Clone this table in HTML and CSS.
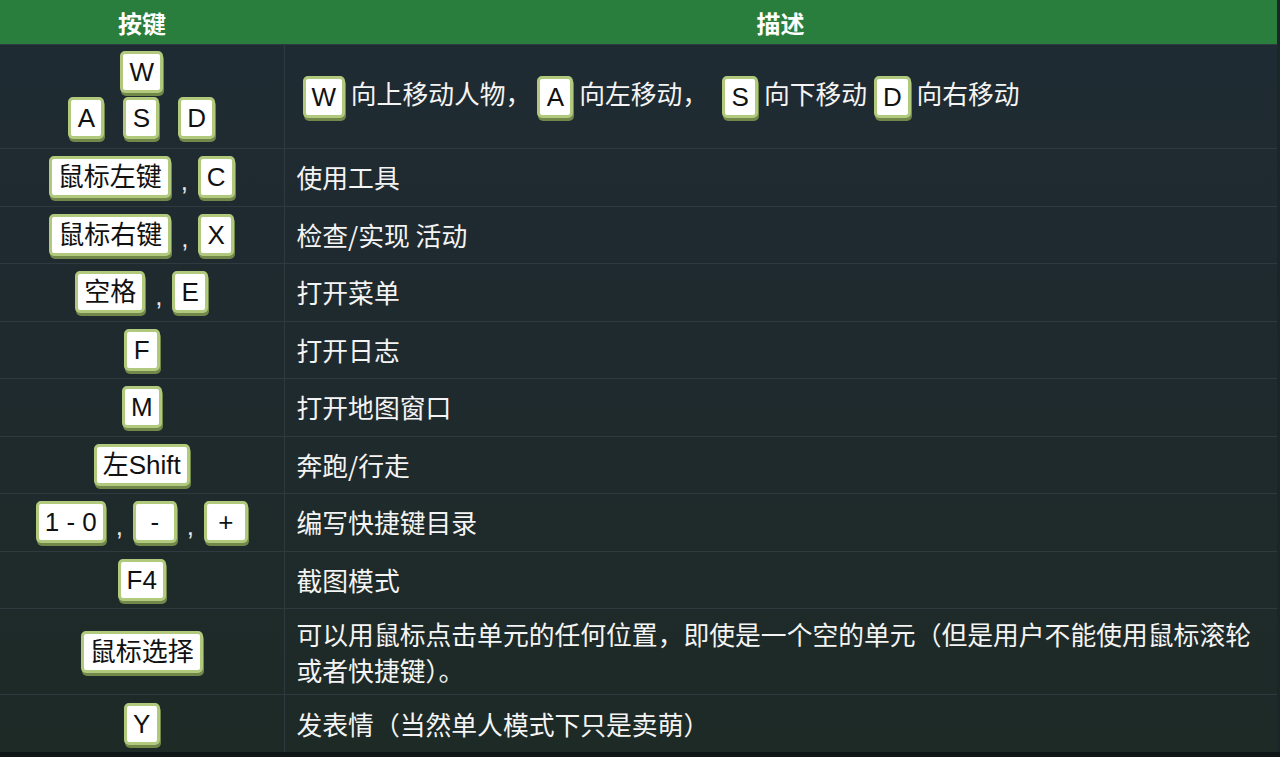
FILE: index.html
```html
<!DOCTYPE html>
<html lang="zh-CN">
<head>
    <meta charset="UTF-8">
    <meta name="viewport" content="width=device-width, initial-scale=1.0">
    <title>按键说明</title>
    <link rel="stylesheet" href="styles.css">
</head>
<body>
    <table class="keys-table">
        <thead>
            <tr>
                <th class="col-key">按键</th>
                <th>描述</th>
            </tr>
        </thead>
        <tbody>
            <tr class="row-tall">
                <td class="col-key">
                    <div class="wasd">
                        <div class="wasd-row"><span class="key">W</span></div>
                        <div class="wasd-row">
                            <span class="key">A</span>
                            <span class="key">S</span>
                            <span class="key">D</span>
                        </div>
                    </div>
                </td>
                <td class="desc desc-inline">
                    <span class="key">W</span> 向上移动人物，<span class="gap"></span><span class="key">A</span> 向左移动，<span class="gap wide"></span><span class="key">S</span> 向下移动 <span class="gap small"></span><span class="key">D</span> 向右移动
                </td>
            </tr>
            <tr>
                <td class="col-key"><span class="key">鼠标左键</span><span class="sep">,</span><span class="key">C</span></td>
                <td class="desc">使用工具</td>
            </tr>
            <tr>
                <td class="col-key"><span class="key">鼠标右键</span><span class="sep">,</span><span class="key">X</span></td>
                <td class="desc">检查/实现 活动</td>
            </tr>
            <tr>
                <td class="col-key"><span class="key">空格</span><span class="sep">,</span><span class="key">E</span></td>
                <td class="desc">打开菜单</td>
            </tr>
            <tr>
                <td class="col-key"><span class="key">F</span></td>
                <td class="desc">打开日志</td>
            </tr>
            <tr>
                <td class="col-key"><span class="key">M</span></td>
                <td class="desc">打开地图窗口</td>
            </tr>
            <tr>
                <td class="col-key"><span class="key">左Shift</span></td>
                <td class="desc">奔跑/行走</td>
            </tr>
            <tr>
                <td class="col-key"><span class="key">1 - 0</span><span class="sep">,</span><span class="key key-wide">-</span><span class="sep">,</span><span class="key key-wide">+</span></td>
                <td class="desc">编写快捷键目录</td>
            </tr>
            <tr>
                <td class="col-key"><span class="key">F4</span></td>
                <td class="desc">截图模式</td>
            </tr>
            <tr class="row-mid">
                <td class="col-key"><span class="key">鼠标选择</span></td>
                <td class="desc">可以用鼠标点击单元的任何位置，即使是一个空的单元（但是用户不能使用鼠标滚轮或者快捷键）。</td>
            </tr>
            <tr class="row-last">
                <td class="col-key"><span class="key">Y</span></td>
                <td class="desc">发表情（当然单人模式下只是卖萌）</td>
            </tr>
        </tbody>
    </table>
    <div class="bottom-strip"></div>
</body>
</html>
```

FILE: styles.css
```css
body {
    margin: 0;
    padding: 0;
    background-color: #1c2629;
    font-family: "Liberation Sans", "Noto Sans CJK SC", sans-serif;
    color: #f2f2f2;
    height: 757px;
    overflow: hidden;
}

.keys-table {
    width: 1277px;
    border-collapse: collapse;
    table-layout: fixed;
    background: linear-gradient(to bottom, #1f2b33 0%, #1f2a2e 50%, #1e2a26 100%);
}

.keys-table th {
    height: 44px;
    padding: 0;
    background-color: #2a7e3d;
    color: #ffffff;
    font-family: "Noto Sans CJK SC", sans-serif;
    font-size: 24px;
    font-weight: bold;
    text-align: center;
}

.keys-table th.col-key {
    width: 284px;
}

.keys-table td {
    height: 56.5px;
    padding: 0;
    border-top: 1px solid #2e3b3e;
    vertical-align: middle;
}

.keys-table td.col-key {
    text-align: center;
    border-right: 1px solid #2e3b3e;
}

.row-tall td {
    height: 103px;
}

.row-mid td {
    height: 85px;
}

.row-last td {
    height: 57px;
}

.desc {
    padding: 0 12px 0 12px !important;
    font-family: "Noto Sans CJK SC", sans-serif;
    font-size: 25.8px;
    line-height: 36px;
    color: #f4f4f4;
}

.desc-inline {
    padding-left: 18px !important;
}

.key {
    display: inline-block;
    min-width: 18px;
    padding: 0 6px;
    background-color: #ffffff;
    color: #111111;
    font-family: "Liberation Sans", "Noto Sans CJK SC", sans-serif;
    font-size: 26px;
    line-height: 36px;
    text-align: center;
    border: 3px solid #b1c97d;
    border-radius: 5px;
    box-shadow: 1px 3px 0 #72874a;
    vertical-align: middle;
}

.key-wide {
    min-width: 22px;
    padding: 0 8px;
}

.sep {
    display: inline-block;
    width: 27px;
    font-size: 26px;
    color: #e8e8e8;
    vertical-align: middle;
    position: relative;
    top: 4px;
}

.wasd {
    display: flex;
    flex-direction: column;
    align-items: center;
    gap: 4px;
    padding-bottom: 4px;
}

.wasd-row {
    display: flex;
    gap: 19px;
}

.gap {
    display: inline-block;
    width: 6px;
}

.gap.wide {
    width: 14px;
}

.gap.small {
    width: 1px;
}

.bottom-strip {
    height: 6px;
    background-color: #101615;
}
```
